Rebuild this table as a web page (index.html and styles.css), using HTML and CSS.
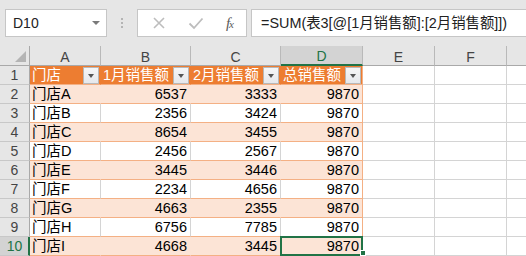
FILE: index.html
```html
<!DOCTYPE html>
<html>
<head>
<meta charset="utf-8">
<link rel="stylesheet" href="styles.css">
</head>
<body>
<div class="app">
  <div class="toolbar">
    <div class="namebox"><span>D10</span><span class="caret"></span></div>
    <div class="dots"><i></i><i></i><i></i></div>
    <div class="btns">
      <svg class="ico" width="14" height="14" viewBox="0 0 14 14"><path d="M2 2L12 12M12 2L2 12" stroke="#bdbdbd" stroke-width="1.6" fill="none"/></svg>
      <svg class="ico" width="16" height="14" viewBox="0 0 16 14"><path d="M1.5 7.5L6 12L14.5 2.5" stroke="#bdbdbd" stroke-width="1.8" fill="none"/></svg>
      <span class="fx">f<small>x</small></span>
    </div>
    <div class="formula">=SUM(表3[@[1月销售额]:[2月销售额]])</div>
  </div>
  <div class="sheet">
    <div class="corner"><span class="tri"></span></div>
    <div class="ch">A</div><div class="ch">B</div><div class="ch">C</div><div class="ch sel">D</div><div class="ch">E</div><div class="ch">F</div><div class="ch last"></div>

    <div class="rh">1</div>
    <div class="c hd">门店<span class="dd"></span></div>
    <div class="c hd">1月销售额<span class="dd"></span></div>
    <div class="c hd">2月销售额<span class="dd"></span></div>
    <div class="c hd edge">总销售额<span class="dd"></span></div>
    <div class="c"></div><div class="c"></div><div class="c last"></div>

    <div class="rh">2</div>
    <div class="c b">门店A</div><div class="c b n">6537</div><div class="c b n">3333</div><div class="c b n edge">9870</div>
    <div class="c"></div><div class="c"></div><div class="c last"></div>

    <div class="rh">3</div>
    <div class="c w">门店B</div><div class="c w n">2356</div><div class="c w n">3424</div><div class="c w n edge">9870</div>
    <div class="c"></div><div class="c"></div><div class="c last"></div>

    <div class="rh">4</div>
    <div class="c b">门店C</div><div class="c b n">8654</div><div class="c b n">3455</div><div class="c b n edge">9870</div>
    <div class="c"></div><div class="c"></div><div class="c last"></div>

    <div class="rh">5</div>
    <div class="c w">门店D</div><div class="c w n">2456</div><div class="c w n">2567</div><div class="c w n edge">9870</div>
    <div class="c"></div><div class="c"></div><div class="c last"></div>

    <div class="rh">6</div>
    <div class="c b">门店E</div><div class="c b n">3445</div><div class="c b n">3446</div><div class="c b n edge">9870</div>
    <div class="c"></div><div class="c"></div><div class="c last"></div>

    <div class="rh">7</div>
    <div class="c w">门店F</div><div class="c w n">2234</div><div class="c w n">4656</div><div class="c w n edge">9870</div>
    <div class="c"></div><div class="c"></div><div class="c last"></div>

    <div class="rh">8</div>
    <div class="c b">门店G</div><div class="c b n">4663</div><div class="c b n">2355</div><div class="c b n edge">9870</div>
    <div class="c"></div><div class="c"></div><div class="c last"></div>

    <div class="rh">9</div>
    <div class="c w">门店H</div><div class="c w n">6756</div><div class="c w n">7785</div><div class="c w n edge">9870</div>
    <div class="c"></div><div class="c"></div><div class="c last"></div>

    <div class="rh sel">10</div>
    <div class="c b">门店I</div><div class="c b n">4668</div><div class="c b n">3445</div><div class="c b n edge active">9870<span class="handle"></span></div>
    <div class="c"></div><div class="c"></div><div class="c last"></div>
  </div>
</div>
</body>
</html>
```
FILE: styles.css
```css
* { box-sizing: border-box; }
html, body { margin: 0; padding: 0; }
body {
  width: 526px;
  height: 256px;
  overflow: hidden;
  background: #fff;
  font-family: "Liberation Sans", "Noto Sans CJK SC", sans-serif;
}
.app { display: flex; flex-direction: column; width: 526px; }

.toolbar {
  height: 46px;
  background: #e6e6e6;
  display: flex;
  align-items: flex-start;
  padding: 9px 0 0 5px;
}
.namebox {
  width: 102px;
  height: 28px;
  background: #fff;
  border: 1px solid #c6c6c6;
  display: flex;
  align-items: center;
  justify-content: space-between;
  padding: 0 6px 0 7px;
  font-size: 14px;
  color: #222;
}
.caret {
  width: 0; height: 0;
  border-left: 4px solid transparent;
  border-right: 4px solid transparent;
  border-top: 4px solid #7a7a7a;
}
.dots {
  width: 30px;
  height: 28px;
  display: flex;
  flex-direction: column;
  align-items: center;
  justify-content: center;
  gap: 2px;
}
.dots i { width: 2px; height: 2px; background: #b4b4b4; display: block; }
.btns {
  width: 110px;
  height: 28px;
  background: #fff;
  border: 1px solid #c6c6c6;
  display: flex;
  align-items: center;
  padding: 0 13px 0 14px;
  justify-content: space-between;
}
.fx {
  font-family: "Liberation Serif", serif;
  font-style: italic;
  font-size: 15px;
  color: #5a5a5a;
  letter-spacing: -1px;
}
.fx small { font-size: 11px; }
.formula {
  margin-left: 4px;
  flex: 1;
  height: 28px;
  background: #fff;
  border: 1px solid #c6c6c6;
  border-right: none;
  padding-left: 9px;
  font-size: 14.4px;
  line-height: 26px;
  color: #222;
  white-space: nowrap;
  overflow: hidden;
}

.sheet {
  display: grid;
  grid-template-columns: 30px 71px 90px 90px 82px 72px 72px 1fr;
  grid-template-rows: 20px repeat(10, 19px);
  font-size: 14.5px;
}
.corner {
  background: #e6e6e6;
  border-right: 1px solid #a9a9a9;
  border-bottom: 1px solid #a9a9a9;
  position: relative;
}
.tri {
  position: absolute;
  right: 3px;
  bottom: 3px;
  width: 0; height: 0;
  border-left: 11px solid transparent;
  border-bottom: 11px solid #b4b4b4;
}
.ch {
  background: #e6e6e6;
  border-right: 1px solid #b9b9b9;
  border-bottom: 1px solid #a9a9a9;
  color: #444;
  text-align: center;
  font-size: 14px;
  line-height: 20px;
  padding-top: 1px;
}
.ch.sel {
  background: #d3d3d3;
  color: #217346;
  border-bottom: 2px solid #217346;
  line-height: 19px;
}
.ch.last { border-right: none; }
.rh {
  background: #e6e6e6;
  border-right: 1px solid #a9a9a9;
  border-bottom: 1px solid #c8c8c8;
  color: #444;
  text-align: center;
  font-size: 14px;
  line-height: 19px;
}
.rh.sel {
  background: #d3d3d3;
  color: #217346;
  border-right: 2px solid #217346;
  padding-left: 1px;
}
.c {
  border-right: 1px solid #d4d4d4;
  border-bottom: 1px solid #d4d4d4;
  line-height: 19px;
  padding: 0 3px 0 2px;
  white-space: nowrap;
  color: #000;
}
.c.last { border-right: none; }
.c.n { text-align: right; }
.c.hd {
  background: #ed7d31;
  color: #fff;
  border-right-color: #ed7d31;
  border-bottom-color: #f4b084;
  display: flex;
  justify-content: space-between;
  align-items: center;
  padding-right: 1px;
}
.c.b {
  background: #fce4d6;
  border-right-color: #fce4d6;
  border-bottom-color: #f4b084;
}
.c.w {
  border-bottom-color: #f4b084;
}
.c.edge { border-right-color: #f4b084; }
.dd {
  width: 16px;
  height: 17px;
  background: linear-gradient(#f6f6f6, #e6e8ec);
  border: 1px solid #b8b8b8;
  position: relative;
  flex: none;
}
.dd::after {
  content: "";
  position: absolute;
  left: 4px;
  top: 6px;
  border-left: 3.5px solid transparent;
  border-right: 3.5px solid transparent;
  border-top: 4px solid #555;
}
.active { position: relative; }
.active::after {
  content: "";
  position: absolute;
  left: -1px;
  top: -1px;
  right: -1px;
  bottom: -1px;
  border: 2px solid #217346;
}
.handle {
  position: absolute;
  right: -4px;
  bottom: -1px;
  width: 6px;
  height: 6px;
  background: #217346;
  border: 1px solid #fff;
  z-index: 2;
}
```
